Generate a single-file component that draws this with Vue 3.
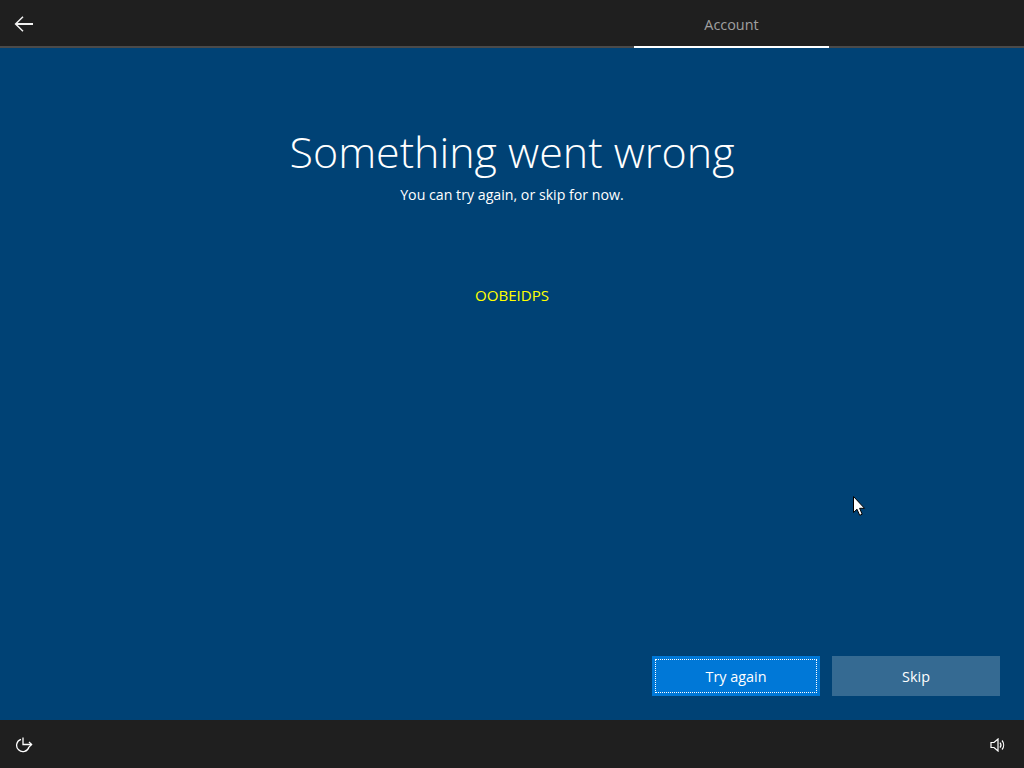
<script setup>
</script>

<template>
  <div class="screen">
    <header class="topbar">
      <button class="back" aria-label="Back">
        <svg width="20" height="16" viewBox="0 0 20 16" fill="none" stroke="#f2f2f2" stroke-width="1.5">
          <path d="M9 .8 1.6 8 9 15.2" />
          <path d="M2 8H19" stroke-width="2" />
        </svg>
      </button>
      <div class="tab">Account</div>
    </header>
    <main class="main">
      <h1 class="title">Something went wrong</h1>
      <p class="subtitle">You can try again, or skip for now.</p>
      <p class="code">OOBEIDPS</p>
      <div class="actions">
        <button class="btn primary"><span class="focus">Try again</span></button>
        <button class="btn secondary">Skip</button>
      </div>
      <svg class="cursor" width="13" height="20" viewBox="0 0 13 20">
        <path d="M.5.5V16.5L4 13.2 6.7 19.3 9.2 18.2 6.6 12.3H11.5Z" fill="#fff" stroke="#000" stroke-width="1" />
      </svg>
    </main>
    <footer class="footer">
      <svg width="18" height="16" viewBox="0 0 18 16" fill="none" stroke="#fff" stroke-width="1.3">
        <path d="M6 2.3A6.3 6.3 0 1 0 14 10" />
        <path d="M8 .5V7.5H16.5" />
        <path d="M14 5 16.6 7.5 14 10" />
      </svg>
      <svg width="16" height="14" viewBox="0 0 16 14" fill="none" stroke="#fff" stroke-width="1.2">
        <path d="M1 4.5H4L8 1V13L4 9.5H1Z" />
        <path d="M10 4.5A4 4 0 0 1 10 9.5" />
        <path d="M12 2.5A7 7 0 0 1 12 11.5" />
      </svg>
    </footer>
  </div>
</template>

<style scoped>
.screen {
  width: 1024px;
  height: 768px;
  display: flex;
  flex-direction: column;
  overflow: hidden;
  background: #004275;
  font-family: "Open Sans", "Noto Sans", sans-serif;
  color: #fff;
}
.topbar {
  height: 46px;
  flex: none;
  display: flex;
  align-items: stretch;
  justify-content: space-between;
  background: #1f1f1f;
  border-bottom: 2px solid #4a4a4a;
  box-sizing: content-box;
}
.back {
  width: 48px;
  margin: 0;
  padding: 2px 0 0;
  border: 0;
  background: none;
  display: flex;
  align-items: center;
  justify-content: center;
}
.tab {
  width: 195px;
  margin-right: 195px;
  margin-bottom: -2px;
  box-sizing: border-box;
  border-bottom: 2px solid #fff;
  display: flex;
  align-items: center;
  justify-content: center;
  font-size: 14.4px;
  color: #a0a0a0;
  padding-top: 2px;
}
.main {
  flex: 1;
  position: relative;
  display: flex;
  flex-direction: column;
  align-items: center;
  padding: 0 24px 24px;
}
.title {
  margin: 74px 0 0;
  font-size: 43px;
  font-weight: 300;
  line-height: 60px;
}
.subtitle {
  margin: 3px 0 0;
  font-size: 14.2px;
  line-height: 20px;
}
.code {
  margin: 80px 0 0;
  font-size: 15.1px;
  line-height: 20px;
  color: #ffff00;
}
.actions {
  margin-top: auto;
  align-self: flex-end;
  display: flex;
  gap: 12px;
}
.btn {
  width: 168px;
  height: 40px;
  padding: 0;
  border: 0;
  font: inherit;
  font-size: 14.4px;
  color: #fff;
}
.primary {
  background: #0078d7;
  padding: 3px;
}
.focus {
  display: flex;
  height: 100%;
  align-items: center;
  justify-content: center;
  box-sizing: border-box;
  border: 1px dotted #fff;
}
.secondary {
  background: #356a92;
}
.cursor {
  position: absolute;
  left: 853px;
  top: 448px;
}
.footer {
  height: 48px;
  flex: none;
  display: flex;
  align-items: center;
  justify-content: space-between;
  padding: 2px 18px 0 15px;
  box-sizing: border-box;
  background: #1f1f1f;
}
</style>
